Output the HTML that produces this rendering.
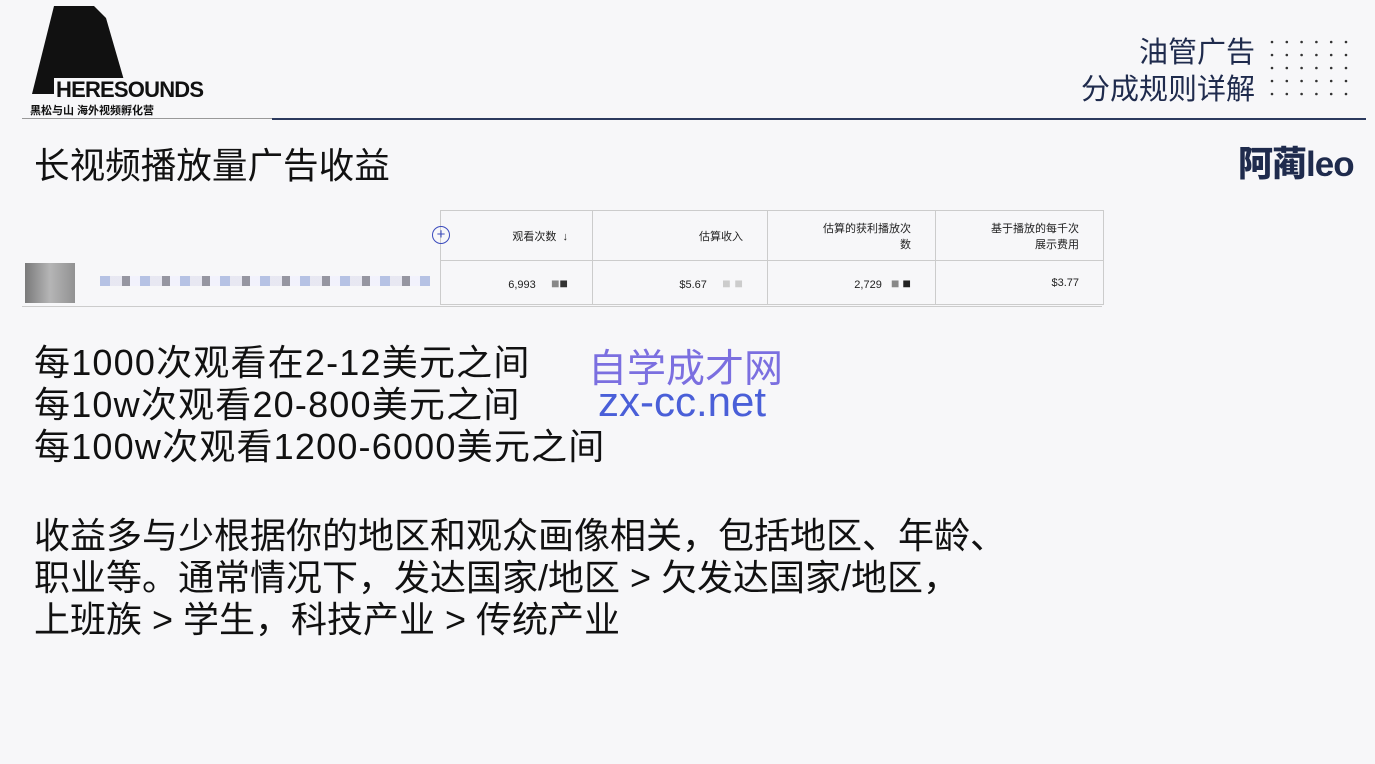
<!DOCTYPE html>
<html><head><meta charset="utf-8"><style>
body{margin:0;width:1375px;height:764px;background:#f7f7f9;position:relative;overflow:hidden;font-family:"Liberation Sans","Noto Sans CJK SC",sans-serif;color:#111}
.a{position:absolute;white-space:nowrap}
.big{font-size:36px;line-height:42px}
table{position:absolute;left:440px;top:210px;border-collapse:collapse;font-size:11px;color:#222}
td{border:1px solid #ccc;text-align:right;padding:0 24px 0 0}
</style></head><body>
<svg class="a" style="left:28px;top:6px" width="190" height="92"><polygon points="4,88 26,0 66,0 78,12 100,88" fill="#111"/><rect x="26" y="72" width="80" height="20" fill="#f7f7f9"/><text x="28" y="91" font-family="Liberation Sans" font-weight="bold" font-size="22" fill="#111" letter-spacing="-0.8">HERESOUNDS</text></svg>
<div class="a" style="left:30px;top:102px;font-size:11px;font-weight:bold">黑松与山 海外视频孵化营</div>
<div class="a" style="left:22px;top:118px;width:250px;height:1px;background:#999"></div>
<div class="a" style="left:272px;top:118px;width:1094px;height:2px;background:#2c3a5e"></div>
<div class="a" style="left:1065px;top:35px;font-size:29px;line-height:37px;text-align:right;color:#1f2b4d;width:190px">油管广告<br>分成规则详解</div>
<svg class="a" style="left:1266px;top:36px" width="90" height="66">
<g fill="#333">
<circle cx="6" cy="6" r="1.3"/><circle cx="20.8" cy="6" r="1.3"/><circle cx="35.6" cy="6" r="1.3"/><circle cx="50.4" cy="6" r="1.3"/><circle cx="65.2" cy="6" r="1.3"/><circle cx="80" cy="6" r="1.3"/>
<circle cx="6" cy="19" r="1.3"/><circle cx="20.8" cy="19" r="1.3"/><circle cx="35.6" cy="19" r="1.3"/><circle cx="50.4" cy="19" r="1.3"/><circle cx="65.2" cy="19" r="1.3"/><circle cx="80" cy="19" r="1.3"/>
<circle cx="6" cy="32" r="1.3"/><circle cx="20.8" cy="32" r="1.3"/><circle cx="35.6" cy="32" r="1.3"/><circle cx="50.4" cy="32" r="1.3"/><circle cx="65.2" cy="32" r="1.3"/><circle cx="80" cy="32" r="1.3"/>
<circle cx="6" cy="45" r="1.3"/><circle cx="20.8" cy="45" r="1.3"/><circle cx="35.6" cy="45" r="1.3"/><circle cx="50.4" cy="45" r="1.3"/><circle cx="65.2" cy="45" r="1.3"/><circle cx="80" cy="45" r="1.3"/>
<circle cx="6" cy="58" r="1.3"/><circle cx="20.8" cy="58" r="1.3"/><circle cx="35.6" cy="58" r="1.3"/><circle cx="50.4" cy="58" r="1.3"/><circle cx="65.2" cy="58" r="1.3"/><circle cx="80" cy="58" r="1.3"/>
</g></svg>
<div class="a" style="left:1238px;top:136px;font-size:35px;font-weight:900;color:#1f2b4d;letter-spacing:-1px">阿蔺leo</div>
<div class="a" style="left:34px;top:138px;font-size:35.6px">长视频播放量广告收益</div>
<table><tr style="height:50px"><td style="width:127px">观看次数 &nbsp;↓</td><td style="width:150px">估算收入</td><td style="width:143px">估算的获利播放次<br>数</td><td style="width:143px">基于播放的每千次<br>展示费用</td></tr>
<tr style="height:44px"><td>6,993 &nbsp;&nbsp;&nbsp; <span style="color:#888;font-size:14px">■</span><span style="color:#333;font-size:14px">■</span></td><td>$5.67 &nbsp;&nbsp;&nbsp; <span style="color:#ccc;font-size:14px">■ ■</span></td><td>2,729 &nbsp; <span style="color:#888;font-size:14px">■</span> <span style="color:#222;font-size:14px">■</span></td><td>$3.77</td></tr></table>
<div class="a" style="left:432px;top:226px;width:16px;height:16px;border:1.5px solid #3b4bbd;border-radius:50%;color:#3b4bbd;font-size:15px;line-height:15px;text-align:center">+</div>
<div class="a" style="left:25px;top:263px;width:50px;height:40px;background:linear-gradient(90deg,#444,#999,#666);opacity:.7"></div>
<div class="a" style="left:100px;top:276px;width:330px;height:10px;background:repeating-linear-gradient(90deg,#8a9fd6 0 10px,#dde 10px 22px,#556 22px 30px,#eef 30px 40px);opacity:.6"></div>
<div class="a" style="left:22px;top:306px;width:1080px;height:1px;background:#ccc"></div>
<div class="a big" style="left:34px;top:342px;letter-spacing:1.2px">每1000次观看在2-12美元之间<br>每10w次观看20-800美元之间<br>每100w次观看1200-6000美元之间</div>
<div class="a" style="left:588px;top:338px;font-size:39px;color:#7b6fe0">自学成才网</div>
<div class="a" style="left:598px;top:378px;font-size:42px;color:#4a5fd8">zx-cc.net</div>
<div class="a big" style="left:34px;top:515px">收益多与少根据你的地区和观众画像相关，包括地区、年龄、<br>职业等。通常情况下，发达国家/地区 &gt; 欠发达国家/地区，<br>上班族 &gt; 学生，科技产业 &gt; 传统产业</div>
</body></html>
